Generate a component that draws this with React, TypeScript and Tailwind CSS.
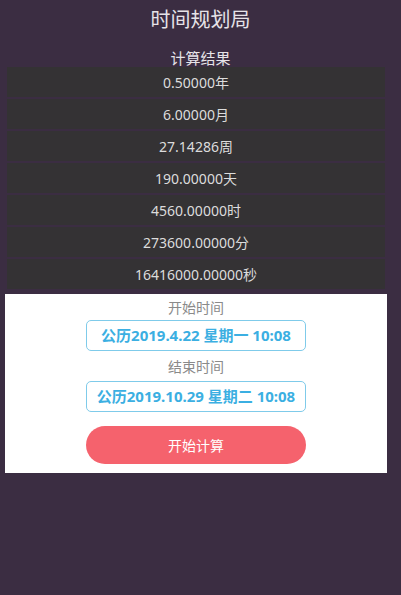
import React from "react";

const rows = [
  "0.50000年",
  "6.00000月",
  "27.14286周",
  "190.00000天",
  "4560.00000时",
  "273600.00000分",
  "16416000.00000秒",
];

export default function App() {
  return (
    <div
      className="w-[401px] h-[595px] bg-[#3b2d42] flex flex-col"
      style={{ fontFamily: '"Noto Sans", "Noto Sans CJK SC", sans-serif' }}
    >
      <div className="h-[40px] flex items-center justify-center text-[20px] text-[#e6e3e8]">
        时间规划局
      </div>
      <div className="h-[27px] flex items-center justify-center text-[15px] text-[#e6e3e8] pt-[9px]">
        计算结果
      </div>
      <div className="ml-[7px] w-[378px] flex flex-col gap-[2px]">
        {rows.map((r) => (
          <div
            key={r}
            className="h-[30px] bg-[#343234] flex items-center justify-center text-[14px] text-[#dcdcdc]"
          >
            {r}
          </div>
        ))}
      </div>
      <div className="mt-[5px] ml-[5px] w-[382px] h-[179px] bg-white flex flex-col items-center">
        <div className="h-[26px] flex items-center text-[14px] text-[#8a8a8a] pt-[1px]">开始时间</div>
        <div className="w-[220px] h-[31px] border-[1.5px] border-[#7fcbea] rounded-[5px] flex items-center justify-center text-[15px] font-bold text-[#3bafe2]">
          公历2019.4.22 星期一 10:08
        </div>
        <div className="h-[30px] flex items-center text-[14px] text-[#8a8a8a]">结束时间</div>
        <div className="w-[220px] h-[31px] border-[1.5px] border-[#7fcbea] rounded-[5px] flex items-center justify-center text-[15px] font-bold text-[#3bafe2]">
          公历2019.10.29 星期二 10:08
        </div>
        <div className="mt-[14px] w-[220px] h-[38px] rounded-full bg-[#f5626d] flex items-center justify-center text-[14px] text-white">
          开始计算
        </div>
      </div>
    </div>
  );
}
